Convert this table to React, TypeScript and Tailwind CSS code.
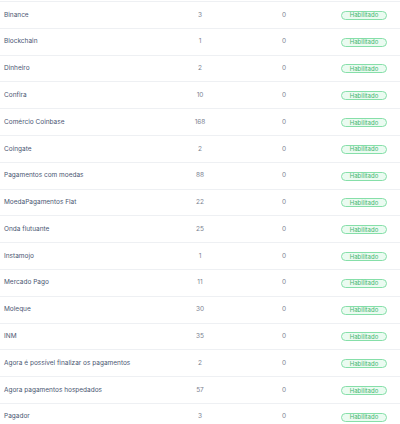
import React from "react";

const rows: [string, string][] = [
  ["Binance", "3"],
  ["Blockchain", "1"],
  ["Dinheiro", "2"],
  ["Confira", "10"],
  ["Comércio Coinbase", "168"],
  ["Coingate", "2"],
  ["Pagamentos com moedas", "88"],
  ["MoedaPagamentos Flat", "22"],
  ["Onda flutuante", "25"],
  ["Instamojo", "1"],
  ["Mercado Pago", "11"],
  ["Moleque", "30"],
  ["INM", "35"],
  ["Agora é possível finalizar os pagamentos", "2"],
  ["Agora pagamentos hospedados", "57"],
  ["Pagador", "3"],
];

export default function App() {
  return (
    <div
      className="w-[400px] h-[424px] overflow-hidden bg-white pt-px"
      style={{ fontFamily: "Inter, 'Noto Sans', sans-serif" }}
    >
      {rows.map(([name, n], i) => (
        <div
          key={i}
          className="flex items-center h-[26.8px] pt-[1px] border-t border-[#eef0f3] text-[6.5px]"
        >
          <div className="w-[170px] pl-[4px] text-[#4a5672]">{name}</div>
          <div className="w-[60px] text-center text-[#7a8190]">{n}</div>
          <div className="w-[108px] text-center text-[#7a8190]">0</div>
          <div className="flex-1 flex justify-start pl-[3px]">
            <span className="h-[9px] w-[46px] flex items-center justify-center rounded-full border border-[#86dfa9] bg-[#ebfbf1] text-[#3fb56e] text-[6px] leading-none">
              Habilitado
            </span>
          </div>
        </div>
      ))}
    </div>
  );
}
